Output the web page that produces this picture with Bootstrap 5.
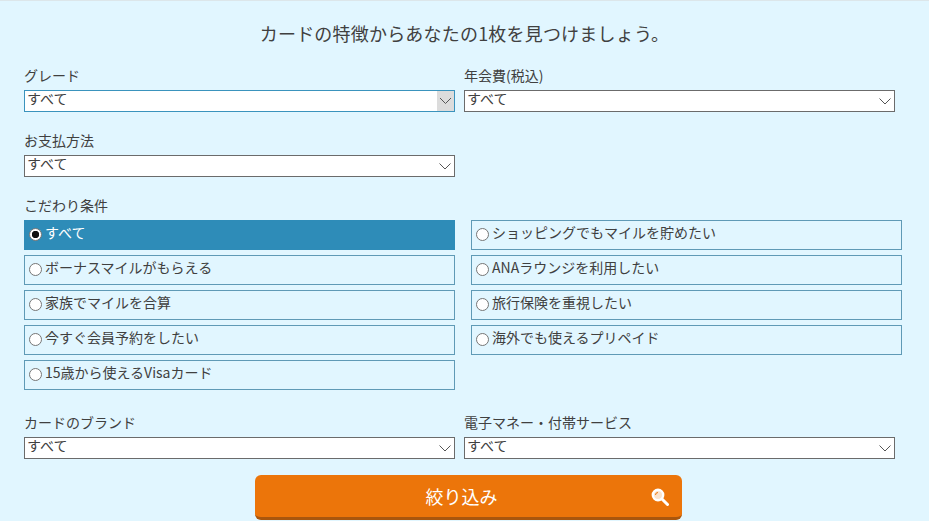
<!DOCTYPE html>
<html lang="ja">
<head>
  <meta charset="UTF-8" />
  <meta name="viewport" content="width=device-width, initial-scale=1" />
  <title>カード検索</title>
  <link href="https://cdn.jsdelivr.net/npm/bootstrap@5.3.3/dist/css/bootstrap.min.css" rel="stylesheet" />
  <style>
    html, body { height: 521px; overflow: hidden; }
    body {
      background: #e1f6ff;
      border-top: 1px solid #dce6ea;
      color: #404040;
      font-family: "Noto Sans CJK JP", sans-serif;
      font-size: 14px;
      line-height: 20px;
    }
    .search-box { padding: 22px 24px 0; }
    .search-title { font-size: 18px; line-height: 20px; font-weight: 400; letter-spacing: .2px; text-align: center; margin: 0 0 22px; color: #404040; }
    .select-row { gap: 9px; margin-bottom: 18px; }
    .select-item { width: 431px; }
    .select-label { display: block; margin: 0 0 5px; font-size: 14px; line-height: 20px; }
    .form-select.plain-select {
      height: 22px;
      min-height: 0;
      padding: 0 24px 6px 2px;
      border: 1px solid #6b6b6b;
      border-radius: 0;
      font-size: 14px;
      line-height: 14px;
      color: #404040;
      background-color: #fff;
      background-image: url("data:image/svg+xml,%3Csvg xmlns='http://www.w3.org/2000/svg' width='12' height='7'%3E%3Cpath d='M.5.5 6 6l5.500-5.500' fill='none' stroke='%23555' stroke-width='1'/%3E%3C/svg%3E");
      background-position: right 3px center;
      background-size: 12px 7px;
      background-repeat: no-repeat;
    }
    .form-select.plain-select.is-hover {
      border-color: #3a93bd;
      background-image: url("data:image/svg+xml,%3Csvg xmlns='http://www.w3.org/2000/svg' width='17' height='20'%3E%3Crect width='17' height='20' fill='%23dcdcdc'/%3E%3Cpath d='M3 7l5.500 5.500L14 7' fill='none' stroke='%23555' stroke-width='1'/%3E%3C/svg%3E");
      background-position: right 0 center;
      background-size: 17px 20px;
    }
    .cond-label { margin: 0 0 5px; line-height: 20px; }
    .cond-grid { display: grid; grid-template-columns: 431px 431px; column-gap: 16px; row-gap: 5px; margin-bottom: 22px; }
    .cond-item {
      display: flex;
      align-items: center;
      height: 30px;
      margin: 0;
      padding: 0 0 6px 4px;
      border: 1px solid #5f9ab6;
      font-size: 14px;
      line-height: 20px;
      color: #404040;
    }
    .cond-item.is-on { background: #2e8cb8; border-color: #2e8cb8; color: #fff; }
    .cond-item .form-check-input {
      width: 13px;
      height: 13px;
      margin: 5px 3px 0 0;
      flex: none;
      border: 1px solid #767676;
      background-color: #fff;
      box-shadow: none;
    }
    .cond-item .form-check-input:checked {
      background-color: #fff;
      border-color: #767676;
      background-image: radial-gradient(circle, #111 0 3.4px, transparent 4px);
      background-size: auto;
    }
    .last-row { margin-bottom: 16px; }
    .search-btn {
      display: flex;
      align-items: center;
      justify-content: center;
      position: relative;
      width: 427px;
      height: 45px;
      margin: 0 0 0 231px;
      padding: 0 14px 1px 0;
      background: #ec750a;
      border: 0;
      border-bottom: 3px solid #a9560d;
      border-radius: 6px;
      color: #fff;
      font-size: 18px;
      line-height: 20px;
    }
    .search-btn:hover { background: #ec750a; color: #fff; }
    .search-icon { position: absolute; right: 13px; top: 13px; }
  </style>
</head>
<body>

  <form class="search-box">
    <h2 class="search-title">カードの特徴からあなたの1枚を見つけましょう。</h2>

    <div class="d-flex select-row">
      <div class="select-item">
        <label class="select-label">グレード</label>
        <select class="form-select plain-select is-hover"><option>すべて</option></select>
      </div>
      <div class="select-item">
        <label class="select-label">年会費(税込)</label>
        <select class="form-select plain-select"><option>すべて</option></select>
      </div>
    </div>

    <div class="d-flex select-row">
      <div class="select-item">
        <label class="select-label">お支払方法</label>
        <select class="form-select plain-select"><option>すべて</option></select>
      </div>
    </div>

    <p class="cond-label">こだわり条件</p>
    <div class="cond-grid">
      <label class="cond-item is-on"><input class="form-check-input" type="radio" name="cond" checked />すべて</label>
      <label class="cond-item"><input class="form-check-input" type="radio" name="cond" />ショッピングでもマイルを貯めたい</label>
      <label class="cond-item"><input class="form-check-input" type="radio" name="cond" />ボーナスマイルがもらえる</label>
      <label class="cond-item"><input class="form-check-input" type="radio" name="cond" />ANAラウンジを利用したい</label>
      <label class="cond-item"><input class="form-check-input" type="radio" name="cond" />家族でマイルを合算</label>
      <label class="cond-item"><input class="form-check-input" type="radio" name="cond" />旅行保険を重視したい</label>
      <label class="cond-item"><input class="form-check-input" type="radio" name="cond" />今すぐ会員予約をしたい</label>
      <label class="cond-item"><input class="form-check-input" type="radio" name="cond" />海外でも使えるプリペイド</label>
      <label class="cond-item"><input class="form-check-input" type="radio" name="cond" />15歳から使えるVisaカード</label>
    </div>

    <div class="d-flex select-row last-row">
      <div class="select-item">
        <label class="select-label">カードのブランド</label>
        <select class="form-select plain-select"><option>すべて</option></select>
      </div>
      <div class="select-item">
        <label class="select-label">電子マネー・付帯サービス</label>
        <select class="form-select plain-select"><option>すべて</option></select>
      </div>
    </div>

    <button type="button" class="btn search-btn">絞り込み
      <svg class="search-icon" width="18" height="18" viewBox="0 0 18 18">
        <circle cx="7" cy="7" r="5.2" fill="#fbe3cc" stroke="#fff" stroke-width="2.4"/>
        <path d="M4.500 7a2.500 2.500 0 0 1 2.500-2.500" fill="none" stroke="#ec750a" stroke-width="1"/>
        <path d="M11 11l5.500 5.500" stroke="#fff" stroke-width="3" stroke-linecap="round"/>
      </svg>
    </button>
  </form>

  <script src="https://cdn.jsdelivr.net/npm/bootstrap@5.3.3/dist/js/bootstrap.bundle.min.js"></script>
</body>
</html>
